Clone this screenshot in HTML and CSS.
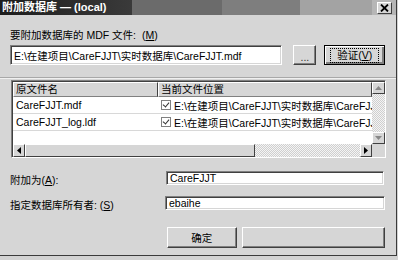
FILE: index.html
```html
<!DOCTYPE html>
<html lang="zh">
<head>
  <meta charset="utf-8">
  <title>附加数据库</title>
  <link rel="stylesheet" href="styles.css">
</head>
<body>
  <div class="window">
    <div class="titlebar">
      <span class="title">附加数据库 — (local)</span>
      <span class="close">
        <svg width="9" height="8" viewBox="0 0 9 8"><path d="M1 0.5 L8 7.5 M8 0.5 L1 7.5" stroke="#000" stroke-width="1.8"/></svg>
      </span>
    </div>

    <div class="content">
      <div class="label">要附加数据库的 MDF 文件: <span class="key">(<u>M</u>)</span></div>
      <div class="file-row">
        <div class="input file">E:\在建项目\CareFJJT\实时数据库\CareFJJT.mdf</div>
        <div class="btn dots">...</div>
        <div class="btn default"><span class="focus">验证(<u>V</u>)</span></div>
      </div>

      <div class="sep"></div>

      <!-- 文件列表 -->
      <div class="grid">
        <div class="list">
          <div class="head">
            <div class="col1">原文件名</div>
            <div class="col2">当前文件位置</div>
          </div>
          <div class="row">
            <div class="col1">CareFJJT.mdf</div>
            <div class="col2"><span class="check"></span>E:\在建项目\CareFJJT\实时数据库\CareFJJT.mdf</div>
          </div>
          <div class="row">
            <div class="col1">CareFJJT_log.ldf</div>
            <div class="col2"><span class="check"></span>E:\在建项目\CareFJJT\实时数据库\CareFJJT_log.ldf</div>
          </div>
        </div>
        <div class="vscroll">
          <div class="arrow"><svg width="7" height="4" viewBox="0 0 7 4"><path d="M0 4 L3.5 0 L7 4 Z" fill="#888"/></svg></div>
          <div class="track"></div>
          <div class="arrow"><svg width="7" height="4" viewBox="0 0 7 4"><path d="M0 0 L3.5 4 L7 0 Z" fill="#888"/></svg></div>
        </div>
        <div class="hscroll">
          <div class="arrow"><svg width="4" height="7" viewBox="0 0 4 7"><path d="M4 0 L0 3.5 L4 7 Z" fill="#000"/></svg></div>
          <div class="thumb"></div>
          <div class="track"></div>
          <div class="arrow"><svg width="4" height="7" viewBox="0 0 4 7"><path d="M0 0 L4 3.5 L0 7 Z" fill="#000"/></svg></div>
        </div>
        <div class="corner"></div>
      </div>

      <div class="field first">
        <div class="flabel">附加为(<u>A</u>):</div>
        <div class="input name">CareFJJT</div>
      </div>
      <div class="field second">
        <div class="flabel">指定数据库所有者: (<u>S</u>)</div>
        <div class="input owner">ebaihe</div>
      </div>

      <div class="buttons">
        <div class="btn ok">确定</div>
        <div class="btn blank"></div>
      </div>
    </div>
  </div>
</body>
</html>
```

FILE: styles.css
```css
*{box-sizing: border-box;}

body{
  margin: 0;
  background: #d2d2d2;
  font-family: "Liberation Sans", "Noto Sans CJK SC", sans-serif;
  font-size: 10.5px;
  color: #000;
}

.window{
  width: 397px;
  height: 256px;
  background: #d6d6d6;
  border-right: 1px solid #3a3a3a;
  border-bottom: 1px solid #3a3a3a;
}

/* 타이틀바 */
.titlebar{
  height: 15px;
  display: flex;
  align-items: center;
  justify-content: space-between;
  padding: 0 4px 0 2px;
  background: linear-gradient(to right, #1c1c1c 0, #3a3a3a 132px, #6b6b6b 132px, #6b6b6b 222px, #7e7e7e 222px, #7e7e7e 300px, #a3a3a3 300px, #a3a3a3 372px, #b6b6b6 372px);
}
.title{
  color: #fff;
  font-weight: bold;
  font-size: 11px;
  line-height: 15px;
}
.close{
  width: 15px;
  height: 12px;
  display: flex;
  align-items: center;
  justify-content: center;
  background: #d6d6d6;
  border: 1px solid;
  border-color: #fff #404040 #404040 #fff;
}

.content{
  padding: 14px 11px 0 10px;
}

.label{
  line-height: 12px;
  margin-bottom: 4px;
}
.key{margin-left: 3px;}

.file-row{
  display: flex;
  height: 20px;
}

/* 입력칸 (sunken) */
.input{
  background: #fff;
  border: 1px solid;
  border-color: #808080 #fff #fff #808080;
  box-shadow: inset 1px 1px #404040, inset -1px -1px #d6d6d6;
  padding: 0 3px;
  display: flex;
  align-items: center;
  white-space: nowrap;
  overflow: hidden;
}
.input.file{width: 274px;}

/* 버튼 (raised) */
.btn{
  background: #d6d6d6;
  border: 1px solid;
  border-color: #fff #404040 #404040 #fff;
  box-shadow: inset -1px -1px #808080;
  display: flex;
  align-items: center;
  justify-content: center;
}
.btn.dots{
  width: 23px;
  margin-left: 11px;
  padding-top: 4px;
  color: #333;
}
.btn.default{
  width: 61px;
  margin-left: 8px;
  border: 1px solid #000;
  box-shadow: inset 1px 1px #fff, inset -2px -2px #808080;
}
.focus{
  border: 1px dotted #000;
  padding: 1px 6px;
  line-height: 11px;
}

.sep{
  margin: 12px -11px 0 -10px;
  height: 2px;
  border-top: 1px solid #a8a8a8;
  border-bottom: 1px solid #f0f0f0;
}

/* 리스트 */
.grid{
  margin: 1px 0 0 1px;
  width: 375px;
  height: 78px;
  display: grid;
  grid-template-columns: 1fr 13px;
  grid-template-rows: 1fr 13px;
  border: 1px solid;
  border-color: #808080 #fff #fff #808080;
  box-shadow: inset 1px 1px #404040;
  padding: 1px 0 0 1px;
  background: #fff;
}
.list{
  overflow: hidden;
  background: #fff;
}
.head{
  display: flex;
  height: 15px;
  background: #d6d6d6;
}
.head > div{
  border: 1px solid;
  border-color: #fff #404040 #808080 #fff;
  line-height: 13px;
  padding-left: 2px;
}
.col1{flex: 0 0 145px; padding-left: 3px;}
.col2{flex: 1; white-space: nowrap; display: flex; align-items: center;}
.row{
  display: flex;
  height: 17px;
  align-items: center;
  border-bottom: 1px solid #d8d8d8;
  white-space: nowrap;
}
.row .col2{padding-left: 3px;}
.check{
  width: 10px;
  height: 10px;
  margin-right: 3px;
  border: 1px solid #808080;
  background: #fff;
  position: relative;
}
.check::after{
  content: "";
  position: absolute;
  left: 2px;
  top: 0px;
  width: 3px;
  height: 5px;
  border: solid #333;
  border-width: 0 1.5px 1.5px 0;
  transform: rotate(40deg);
}

.vscroll{
  display: flex;
  flex-direction: column;
}
.vscroll .track, .hscroll .track{
  flex: 1;
  background: repeating-conic-gradient(#f4f4f4 0 25%, #cfcfcf 0 50%) 0 0/2px 2px;
}
.arrow{
  flex: 0 0 12px;
  background: #d6d6d6;
  border: 1px solid;
  border-color: #fff #404040 #404040 #fff;
  display: flex;
  align-items: center;
  justify-content: center;
}
.vscroll .arrow{height: 12px;}
.hscroll{
  display: flex;
}
.hscroll .thumb{
  flex: 0 0 230px;
  background: #d6d6d6;
  border: 1px solid;
  border-color: #fff #404040 #404040 #fff;
}
.corner{background: #d6d6d6;}

/* 아래 입력 */
.field{
  display: flex;
  align-items: center;
}
.field.first{margin-top: 9px; height: 21px;}
.field.second{margin-top: 5px; height: 20px;}
.flabel{
  flex: 0 0 156px;
  padding-top: 3px;
}
.input.name{width: 218px;}
.input.owner{width: 222px; margin-left: -1px;}

.buttons{
  display: flex;
  gap: 5px;
  margin-top: 14px;
  padding-left: 157px;
  height: 21px;
}
.btn.ok{width: 71px;}
.btn.blank{width: 146px;}
```
